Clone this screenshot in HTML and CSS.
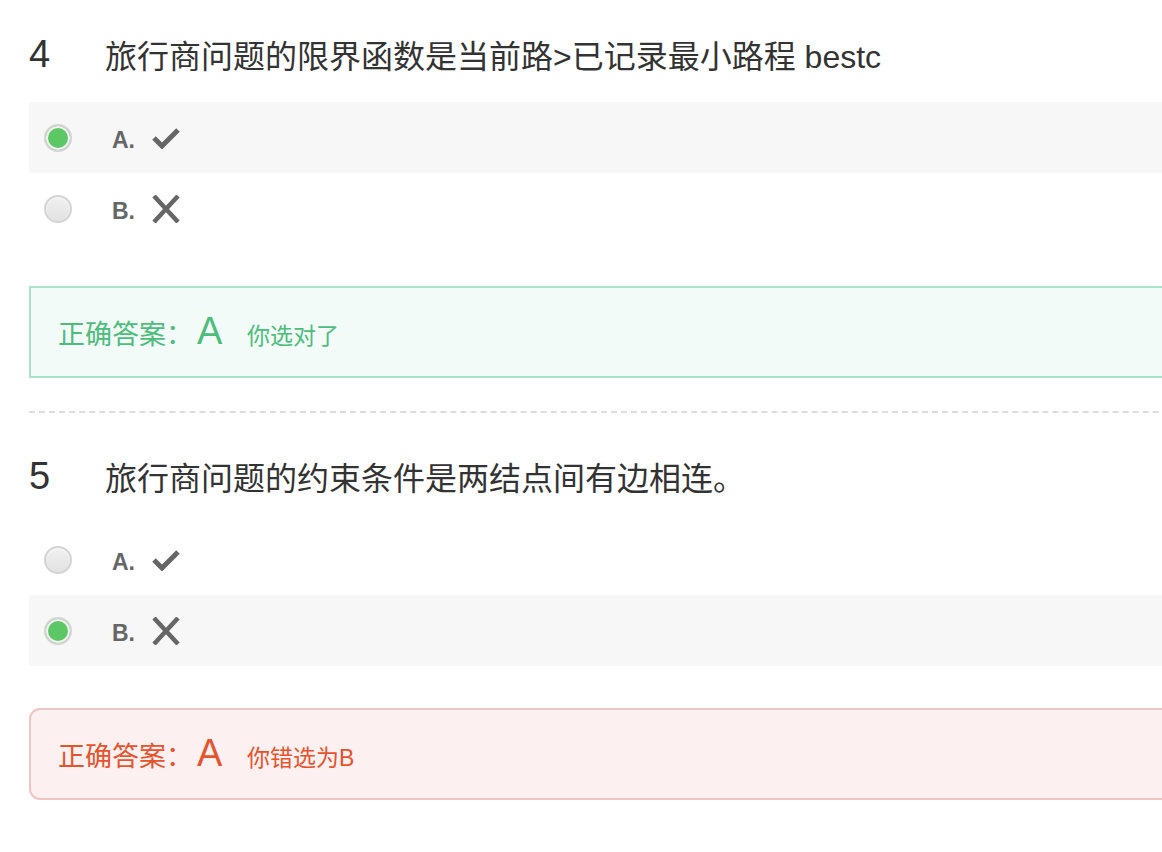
FILE: index.html
```html
<!DOCTYPE html>
<html lang="zh">
<head>
  <meta charset="UTF-8">
  <title>判断题</title>
  <link rel="stylesheet" href="styles.css">
</head>
<body>
  <div class="paper">
    <div class="question">
      <div class="q-title">
        <span class="q-num">4</span>
        <span class="q-text">旅行商问题的限界函数是当前路&gt;已记录最小路程 bestc</span>
      </div>
      <div class="option checked">
        <span class="radio"></span>
        <span class="opt-label">A.</span>
        <svg class="icon" width="30" height="22" viewBox="0 0 30 22"><path d="M3 11 L11 19 L27 3" fill="none" stroke="#666" stroke-width="5"/></svg>
      </div>
      <div class="option">
        <span class="radio"></span>
        <span class="opt-label">B.</span>
        <svg class="icon" width="30" height="28" viewBox="0 0 30 28"><path d="M3 1 L27 27 M27 1 L3 27" fill="none" stroke="#666" stroke-width="4.5"/></svg>
      </div>
      <div class="answer right">
        <span class="ans-title">正确答案：</span>
        <span class="ans-key">A</span>
        <span class="ans-note">你选对了</span>
      </div>
    </div>

    <div class="question">
      <div class="q-title">
        <span class="q-num">5</span>
        <span class="q-text">旅行商问题的约束条件是两结点间有边相连。</span>
      </div>
      <div class="option">
        <span class="radio"></span>
        <span class="opt-label">A.</span>
        <svg class="icon" width="30" height="22" viewBox="0 0 30 22"><path d="M3 11 L11 19 L27 3" fill="none" stroke="#666" stroke-width="5"/></svg>
      </div>
      <div class="option checked">
        <span class="radio"></span>
        <span class="opt-label">B.</span>
        <svg class="icon" width="30" height="28" viewBox="0 0 30 28"><path d="M3 1 L27 27 M27 1 L3 27" fill="none" stroke="#666" stroke-width="4.5"/></svg>
      </div>
      <div class="answer wrong">
        <span class="ans-title">正确答案：</span>
        <span class="ans-key">A</span>
        <span class="ans-note">你错选为B</span>
      </div>
    </div>
  </div>
</body>
</html>
```

FILE: styles.css
```css
body {
  margin: 0;
  background-color: white;
  color: #333;
  font-family: "Liberation Sans", "Noto Sans CJK SC", sans-serif;
}

.paper {
  padding: 34px 0 0 29px;
  width: 1200px;
}

.question {
  padding-bottom: 33px;
}

.question + .question {
  border-top: 2px dashed #ddd;
  padding-top: 43px;
}

.q-title {
  display: flex;
  align-items: center;
  height: 40px;
  margin-bottom: 28px;
}

.q-num {
  width: 76px;
  font-size: 38px;
  color: #333;
}

.q-text {
  font-size: 32px;
  color: #333;
}

.option {
  display: flex;
  align-items: center;
  height: 71px;
  padding-left: 15px;
}

.option.checked {
  background-color: #f7f7f7;
}

.radio {
  width: 24px;
  height: 24px;
  border-radius: 50%;
  border: 2px solid #d4d4d4;
  background: linear-gradient(#f0f0f0, #e2e2e2);
  box-shadow: inset 0 1px 2px rgba(255, 255, 255, 0.8);
}

.option.checked .radio {
  background: #5cc865;
  box-shadow: inset 0 0 0 2px #f2f2f2;
}

.opt-label {
  margin-left: 40px;
  width: 39px;
  font-size: 23px;
  font-weight: bold;
  color: #666;
  padding-top: 6px;
}

.icon {
  display: block;
}

.answer {
  display: flex;
  align-items: baseline;
  margin-top: 42px;
  padding-left: 27px;
  box-sizing: border-box;
  height: 92px;
  line-height: 86px;
}

.answer.right {
  border: 2px solid #abe2cc;
  background-color: #f2fbf8;
  color: #4cbd7b;
}

.answer.wrong {
  border: 2px solid #efc4c2;
  border-radius: 11px;
  background-color: #fdf0f0;
  color: #e6532c;
}

.ans-title {
  font-size: 27px;
}

.ans-key {
  font-size: 38px;
  margin-left: 4px;
  width: 50px;
}

.ans-note {
  font-size: 23px;
}
```
